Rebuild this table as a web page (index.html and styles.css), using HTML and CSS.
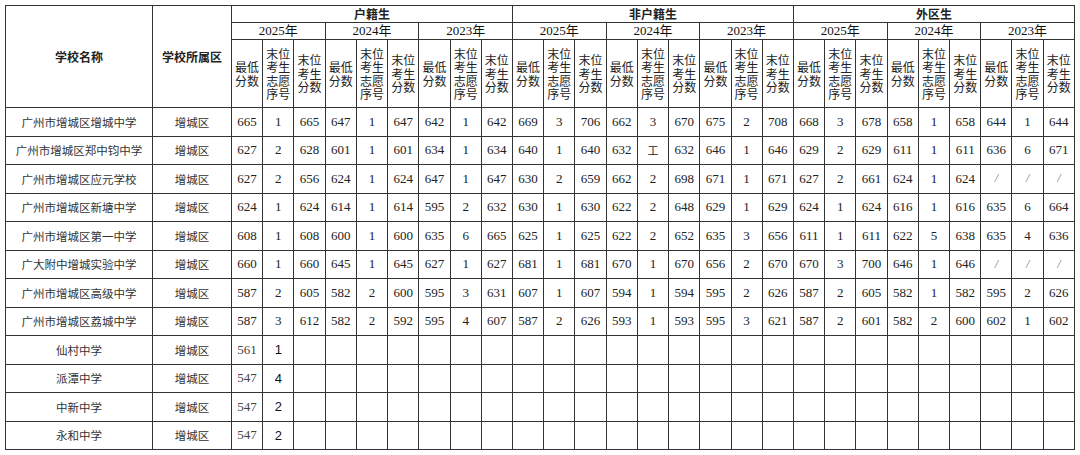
FILE: index.html
```html
<!DOCTYPE html>
<html lang="zh">
<head>
<meta charset="utf-8">
<title>增城区学校分数</title>
<link rel="stylesheet" href="styles.css">
</head>
<body>
<table class="score-table">
<colgroup>
<col class="c-name"><col class="c-dist">
<col><col><col><col><col><col><col><col><col>
<col><col><col><col><col><col><col><col><col>
<col><col><col><col><col><col><col><col><col>
</colgroup>
<thead>
<tr class="h1">
<th rowspan="3" class="hb">学校名称</th>
<th rowspan="3" class="hb">学校所属区</th>
<th colspan="9" class="hb">户籍生</th>
<th colspan="9" class="hb">非户籍生</th>
<th colspan="9" class="hb">外区生</th>
</tr>
<tr class="h2">
<th colspan="3">2025年</th><th colspan="3">2024年</th><th colspan="3">2023年</th>
<th colspan="3">2025年</th><th colspan="3">2024年</th><th colspan="3">2023年</th>
<th colspan="3">2025年</th><th colspan="3">2024年</th><th colspan="3">2023年</th>
</tr>
<tr class="h3">
<th>最低<br>分数</th><th>末位<br>考生<br>志愿<br>序号</th><th>末位<br>考生<br>分数</th>
<th>最低<br>分数</th><th>末位<br>考生<br>志愿<br>序号</th><th>末位<br>考生<br>分数</th>
<th>最低<br>分数</th><th>末位<br>考生<br>志愿<br>序号</th><th>末位<br>考生<br>分数</th>
<th>最低<br>分数</th><th>末位<br>考生<br>志愿<br>序号</th><th>末位<br>考生<br>分数</th>
<th>最低<br>分数</th><th>末位<br>考生<br>志愿<br>序号</th><th>末位<br>考生<br>分数</th>
<th>最低<br>分数</th><th>末位<br>考生<br>志愿<br>序号</th><th>末位<br>考生<br>分数</th>
<th>最低<br>分数</th><th>末位<br>考生<br>志愿<br>序号</th><th>末位<br>考生<br>分数</th>
<th>最低<br>分数</th><th>末位<br>考生<br>志愿<br>序号</th><th>末位<br>考生<br>分数</th>
<th>最低<br>分数</th><th>末位<br>考生<br>志愿<br>序号</th><th>末位<br>考生<br>分数</th>
</tr>
</thead>
<tbody>
<tr><td class="name">广州市增城区增城中学</td><td class="name">增城区</td><td>665</td><td>1</td><td>665</td><td>647</td><td>1</td><td>647</td><td>642</td><td>1</td><td>642</td><td>669</td><td>3</td><td>706</td><td>662</td><td>3</td><td>670</td><td>675</td><td>2</td><td>708</td><td>668</td><td>3</td><td>678</td><td>658</td><td>1</td><td>658</td><td>644</td><td>1</td><td>644</td></tr>
<tr><td class="name">广州市增城区郑中钧中学</td><td class="name">增城区</td><td>627</td><td>2</td><td>628</td><td>601</td><td>1</td><td>601</td><td>634</td><td>1</td><td>634</td><td>640</td><td>1</td><td>640</td><td>632</td><td class="gong">工</td><td>632</td><td>646</td><td>1</td><td>646</td><td>629</td><td>2</td><td>629</td><td>611</td><td>1</td><td>611</td><td>636</td><td>6</td><td>671</td></tr>
<tr><td class="name">广州市增城区应元学校</td><td class="name">增城区</td><td>627</td><td>2</td><td>656</td><td>624</td><td>1</td><td>624</td><td>647</td><td>1</td><td>647</td><td>630</td><td>2</td><td>659</td><td>662</td><td>2</td><td>698</td><td>671</td><td>1</td><td>671</td><td>627</td><td>2</td><td>661</td><td>624</td><td>1</td><td>624</td><td class="na">/</td><td class="na">/</td><td class="na">/</td></tr>
<tr><td class="name">广州市增城区新塘中学</td><td class="name">增城区</td><td>624</td><td>1</td><td>624</td><td>614</td><td>1</td><td>614</td><td>595</td><td>2</td><td>632</td><td>630</td><td>1</td><td>630</td><td>622</td><td>2</td><td>648</td><td>629</td><td>1</td><td>629</td><td>624</td><td>1</td><td>624</td><td>616</td><td>1</td><td>616</td><td>635</td><td>6</td><td>664</td></tr>
<tr><td class="name">广州市增城区第一中学</td><td class="name">增城区</td><td>608</td><td>1</td><td>608</td><td>600</td><td>1</td><td>600</td><td>635</td><td>6</td><td>665</td><td>625</td><td>1</td><td>625</td><td>622</td><td>2</td><td>652</td><td>635</td><td>3</td><td>656</td><td>611</td><td>1</td><td>611</td><td>622</td><td>5</td><td>638</td><td>635</td><td>4</td><td>636</td></tr>
<tr><td class="name">广大附中增城实验中学</td><td class="name">增城区</td><td>660</td><td>1</td><td>660</td><td>645</td><td>1</td><td>645</td><td>627</td><td>1</td><td>627</td><td>681</td><td>1</td><td>681</td><td>670</td><td>1</td><td>670</td><td>656</td><td>2</td><td>670</td><td>670</td><td>3</td><td>700</td><td>646</td><td>1</td><td>646</td><td class="na">/</td><td class="na">/</td><td class="na">/</td></tr>
<tr><td class="name">广州市增城区高级中学</td><td class="name">增城区</td><td>587</td><td>2</td><td>605</td><td>582</td><td>2</td><td>600</td><td>595</td><td>3</td><td>631</td><td>607</td><td>1</td><td>607</td><td>594</td><td>1</td><td>594</td><td>595</td><td>2</td><td>626</td><td>587</td><td>2</td><td>605</td><td>582</td><td>1</td><td>582</td><td>595</td><td>2</td><td>626</td></tr>
<tr><td class="name">广州市增城区荔城中学</td><td class="name">增城区</td><td>587</td><td>3</td><td>612</td><td>582</td><td>2</td><td>592</td><td>595</td><td>4</td><td>607</td><td>587</td><td>2</td><td>626</td><td>593</td><td>1</td><td>593</td><td>595</td><td>3</td><td>621</td><td>587</td><td>2</td><td>601</td><td>582</td><td>2</td><td>600</td><td>602</td><td>1</td><td>602</td></tr>
<tr><td class="name">仙村中学</td><td class="name">增城区</td><td class="soft">561</td><td class="sans">1</td><td></td><td></td><td></td><td></td><td></td><td></td><td></td><td></td><td></td><td></td><td></td><td></td><td></td><td></td><td></td><td></td><td></td><td></td><td></td><td></td><td></td><td></td><td></td><td></td><td></td></tr>
<tr><td class="name">派潭中学</td><td class="name">增城区</td><td class="soft">547</td><td class="sans">4</td><td></td><td></td><td></td><td></td><td></td><td></td><td></td><td></td><td></td><td></td><td></td><td></td><td></td><td></td><td></td><td></td><td></td><td></td><td></td><td></td><td></td><td></td><td></td><td></td><td></td></tr>
<tr><td class="name">中新中学</td><td class="name">增城区</td><td class="soft">547</td><td class="sans">2</td><td></td><td></td><td></td><td></td><td></td><td></td><td></td><td></td><td></td><td></td><td></td><td></td><td></td><td></td><td></td><td></td><td></td><td></td><td></td><td></td><td></td><td></td><td></td><td></td><td></td></tr>
<tr><td class="name">永和中学</td><td class="name">增城区</td><td class="soft">547</td><td class="sans">2</td><td></td><td></td><td></td><td></td><td></td><td></td><td></td><td></td><td></td><td></td><td></td><td></td><td></td><td></td><td></td><td></td><td></td><td></td><td></td><td></td><td></td><td></td><td></td><td></td><td></td></tr>
</tbody>
</table>
</body>
</html>
```
FILE: styles.css
```css
html, body {
  margin: 0;
  padding: 0;
  background: #ffffff;
}
body {
  padding: 5px 0 0 5px;
  font-family: "Liberation Serif", "Noto Sans CJK SC", serif;
  color: #222;
}
.score-table {
  border-collapse: collapse;
  table-layout: fixed;
  width: 1070px;
}
.c-name { width: 147px; }
.c-dist { width: 79px; }
.score-table th,
.score-table td {
  border: 1px solid #333;
  padding: 0;
  text-align: center;
  vertical-align: middle;
  font-size: 13px;
  white-space: nowrap;
  overflow: hidden;
}
.score-table th {
  font-weight: normal;
  font-family: "Noto Sans CJK SC", sans-serif;
  font-size: 12px;
  line-height: 13.5px;
  color: #222;
}
.score-table th.hb {
  font-weight: 700;
}
.h1 { height: 17px; }
.h2 { height: 17px; }
.h2 th {
  font-family: "Liberation Serif", "Noto Sans CJK SC", serif;
  font-size: 13px;
  font-weight: normal;
  color: #111;
}
.h3 { height: 68px; }
.score-table tbody tr { height: 28.5px; }
.score-table td.name {
  font-family: "Noto Sans CJK SC", sans-serif;
  font-size: 11.5px;
  color: #333;
}
.score-table td.gong {
  font-family: "Noto Sans CJK SC", sans-serif;
  font-size: 11px;
}
.score-table td.na {
  color: #777;
  font-style: italic;
  font-size: 12px;
}
.score-table td.soft { color: #444; }
.score-table td.sans {
  font-family: "Liberation Sans", sans-serif;
  font-size: 13px;
  color: #111;
}
```
